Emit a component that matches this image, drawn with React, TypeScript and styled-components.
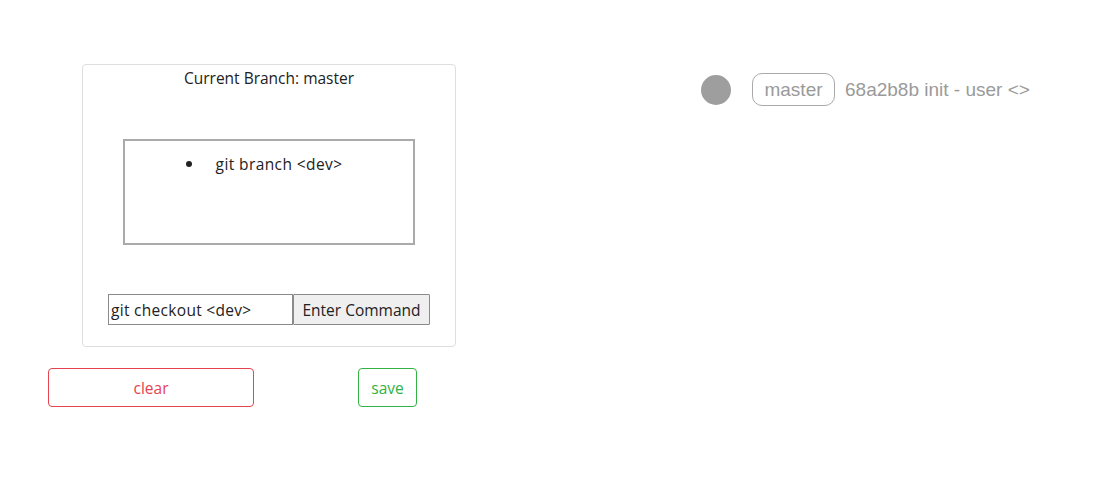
import React from "react";
import styled, { createGlobalStyle } from "styled-components";

const Global = createGlobalStyle`
  html, body { margin: 0; padding: 0; background: #fff; }
  body { font-family: "Open Sans", "Noto Sans", sans-serif; color: #222; }
`;

const Page = styled.div`
  display: flex;
  align-items: flex-start;
  width: 1100px;
  height: 477px;
`;

const LeftColumn = styled.div`
  display: flex;
  flex-direction: column;
  padding: 64px 0 0 48px;
  width: 442px;
`;

const Panel = styled.div`
  box-sizing: border-box;
  margin-left: 34px;
  width: 374px;
  height: 283px;
  border: 1px solid #dedede;
  border-radius: 4px;
  display: flex;
  flex-direction: column;
  align-items: center;
`;

const Title = styled.div`
  font-size: 15.5px;
  line-height: 22px;
  margin-top: 2px;
`;

const CommandBox = styled.div`
  box-sizing: border-box;
  margin-top: 50px;
  width: 292px;
  height: 106px;
  border: 2px solid #aaaaaa;
`;

const CommandList = styled.ul`
  margin: 12px 0 0 0;
  padding: 0 10px 0 0;
  list-style-position: inside;
  text-align: center;
  font-size: 15.5px;
  line-height: 22px;
  li::marker { font-size: 17px; }
  li > span { padding-left: 6px; letter-spacing: 0.4px; }
`;

const InputRow = styled.div`
  display: flex;
  margin-top: 49px;
`;

const CommandInput = styled.input`
  box-sizing: border-box;
  width: 185px;
  height: 31px;
  margin: 0;
  padding: 0 2px;
  border: 1px solid #8a8a8a;
  font-family: inherit;
  font-size: 15.5px;
  letter-spacing: 0.3px;
  color: #222;
  outline: none;
`;

const EnterButton = styled.button`
  box-sizing: border-box;
  width: 137px;
  height: 31px;
  margin: 0;
  border: 1px solid #8a8a8a;
  border-radius: 1px;
  background: #efefef;
  font-family: inherit;
  font-size: 15.5px;
  color: #222;
  padding: 0;
`;

const ActionRow = styled.div`
  display: flex;
  gap: 104px;
  margin-top: 21px;
`;

const OutlineButton = styled.button<{ $color: string; $width: number }>`
  box-sizing: border-box;
  width: ${(p) => p.$width}px;
  height: 39px;
  background: #fff;
  border: 1px solid ${(p) => p.$color};
  border-radius: 4px;
  color: ${(p) => p.$color};
  font-family: inherit;
  font-size: 15.5px;
  padding: 0;
`;

const Graph = styled.div`
  display: flex;
  align-items: center;
  margin: 73px 0 0 211px;
  font-family: "Liberation Sans", Arial, sans-serif;
  color: #9a9a9a;
  font-size: 19px;
`;

const CommitDot = styled.div`
  width: 30px;
  height: 30px;
  border-radius: 50%;
  background: #9e9e9e;
`;

const BranchPill = styled.div`
  box-sizing: border-box;
  margin-left: 21px;
  width: 83px;
  height: 33px;
  border: 1px solid #aaaaaa;
  border-radius: 10px;
  display: flex;
  align-items: center;
  justify-content: center;
`;

const CommitText = styled.span`
  margin-left: 10px;
`;

export default function App() {
  return (
    <>
      <Global />
      <Page>
        <LeftColumn>
          <Panel>
            <Title>Current Branch: master</Title>
            <CommandBox>
              <CommandList>
                <li><span>git branch &lt;dev&gt;</span></li>
              </CommandList>
            </CommandBox>
            <InputRow>
              <CommandInput defaultValue="git checkout <dev>" />
              <EnterButton>Enter Command</EnterButton>
            </InputRow>
          </Panel>
          <ActionRow>
            <OutlineButton $color="#e5434f" $width={206}>clear</OutlineButton>
            <OutlineButton $color="#2fb344" $width={59}>save</OutlineButton>
          </ActionRow>
        </LeftColumn>
        <Graph>
          <CommitDot />
          <BranchPill>master</BranchPill>
          <CommitText>68a2b8b init - user &lt;&gt;</CommitText>
        </Graph>
      </Page>
    </>
  );
}
